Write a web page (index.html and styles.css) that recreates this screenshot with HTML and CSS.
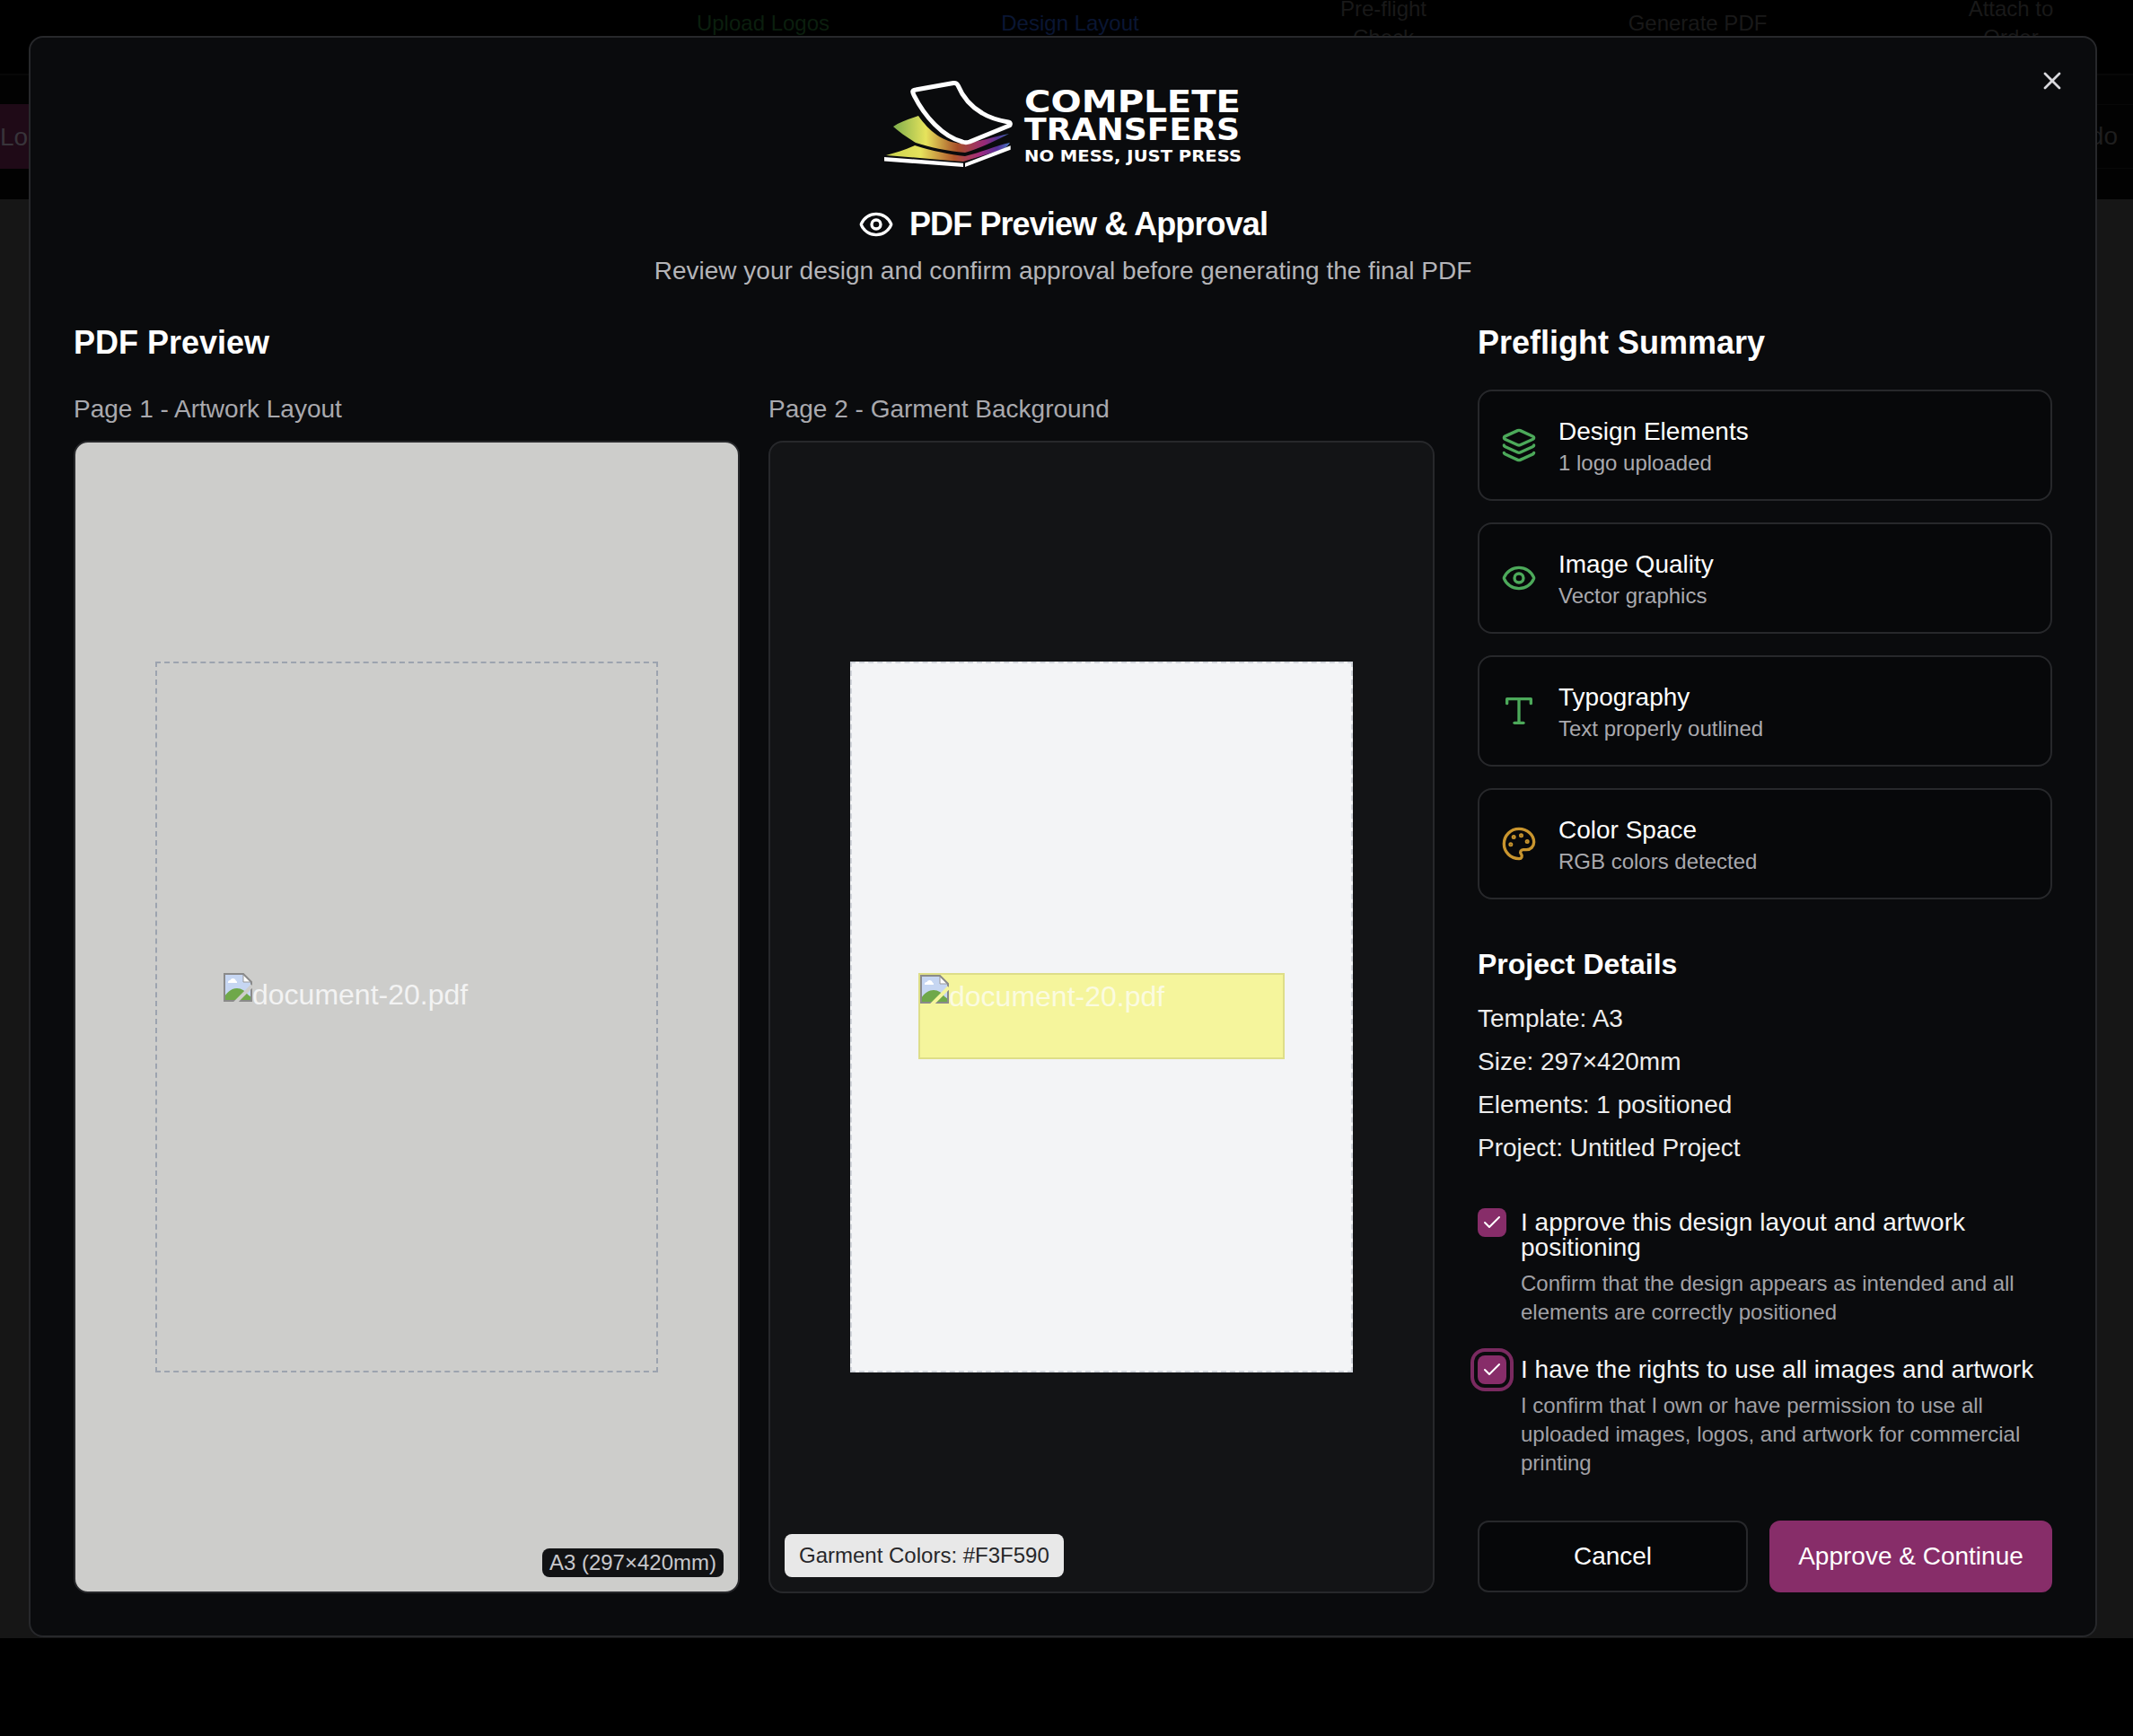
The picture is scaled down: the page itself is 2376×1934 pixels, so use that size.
FILE: index.html
```html
<!DOCTYPE html>
<html lang="en">
<head>
  <meta charset="UTF-8" />
  <meta name="viewport" content="width=device-width, initial-scale=1.0"/>
  <title>PDF Preview &amp; Approval</title>
  <link rel="stylesheet" href="styles.css">
</head>
<body>

  <!-- page behind the dialog, dimmed -->
  <div class="page-behind">
    <div class="stepper">
      <span class="step step-done">Upload Logos</span>
      <span class="step step-active">Design Layout</span>
      <span class="step step-wrap">Pre-flight Check</span>
      <span class="step">Generate PDF</span>
      <span class="step step-wrap">Attach to Order</span>
    </div>
    <div class="toolbar">
      <div class="tool-row">
        <span class="tool-btn">Lo</span>
        <span class="tool-end">do</span>
      </div>
    </div>
    <div class="main-area"></div>
  </div>

  <div class="modal">
    <button class="close-btn" type="button" aria-label="Close">
      <svg class="icon-close" viewBox="0 0 24 24"><path d="M18 6 6 18"/><path d="m6 6 12 12"/></svg>
    </button>

    <header class="modal-head">
      <svg class="logo" viewBox="24 20 400 110" role="img" aria-label="Complete Transfers">
        <defs>
          <linearGradient id="inkA" x1="35" y1="0" x2="165" y2="0" gradientUnits="userSpaceOnUse">
            <stop offset="0" stop-color="#7fae4c"/>
            <stop offset=".28" stop-color="#e6e35c"/>
            <stop offset=".55" stop-color="#a84f28"/>
            <stop offset=".78" stop-color="#9a2a78"/>
            <stop offset=".9" stop-color="#4f3596"/>
            <stop offset="1" stop-color="#4a78c0"/>
          </linearGradient>
          <linearGradient id="inkB" x1="27" y1="0" x2="165" y2="0" gradientUnits="userSpaceOnUse">
            <stop offset="0" stop-color="#c9d24e"/>
            <stop offset=".28" stop-color="#e6e35c"/>
            <stop offset=".55" stop-color="#b0562a"/>
            <stop offset=".76" stop-color="#a02a80"/>
            <stop offset=".9" stop-color="#54309a"/>
            <stop offset="1" stop-color="#4a78c0"/>
          </linearGradient>
        </defs>
        <path d="M35 81C42 76 52 73 63 69C75 86 90 99 113 100C130 98 148 92 164 89C150 96 130 106 115 110C95 108 75 104 60 99C50 93 42 87 35 81Z" fill="url(#inkA)"/>
        <path d="M27 113C38 110 48 107 59 102C78 108 98 112 115 114C132 110 150 102 165 99C162 104 158 106 152 108L113 120C85 118 55 115 27 113Z" fill="url(#inkB)"/>
        <path d="M58 46C56 42 56 40.500 60 40L102 32.500C105 32 106 33 107 35C112 47 122 59 134 66C142 71 152 74 163 76C166 76.500 166 79 164 80L120 98C117 99 115 99 112 98C90 92 70 70 58 46Z" fill="#0a0b0d" stroke="#fff" stroke-width="5" stroke-linejoin="round"/>
        <path d="M25 115L113 121.700V126L25 119.500Z" fill="#fff"/>
        <path d="M115 121.700L165.700 102.300V106.700L115 126Z" fill="#fff"/>
        <text class="logo-big" x="181" y="65" textLength="241" lengthAdjust="spacingAndGlyphs">COMPLETE</text>
        <text class="logo-big" x="181" y="95.500" textLength="240" lengthAdjust="spacingAndGlyphs">TRANSFERS</text>
        <text class="logo-small" x="181" y="120" textLength="242" lengthAdjust="spacingAndGlyphs">NO MESS, JUST PRESS</text>
      </svg>
      <h1 class="modal-title">
        <svg class="icon-title" viewBox="0 0 24 24"><path d="M2.060 12.350a1 1 0 0 1 0-.700 10.750 10.750 0 0 1 19.880 0 1 1 0 0 1 0 .700 10.750 10.750 0 0 1-19.880 0"/><circle cx="12" cy="12" r="3"/></svg>
        PDF Preview &amp; Approval
      </h1>
      <p class="modal-sub">Review your design and confirm approval before generating the final PDF</p>
    </header>

    <div class="modal-body">
      <section class="preview-col">
        <h2 class="section-title">PDF Preview</h2>
        <div class="pages">
          <div class="page-col">
            <div class="page-label">Page 1 - Artwork Layout</div>
            <div class="page-card page-card-light">
              <div class="sheet sheet-artwork">
                <div class="placed">
                  <svg class="broken-img slash-grey" viewBox="0 0 16 16"><use href="#brokenImg"/></svg><span class="alt-text">document-20.pdf</span>
                </div>
              </div>
              <span class="size-badge">A3 (297×420mm)</span>
            </div>
          </div>
          <div class="page-col">
            <div class="page-label">Page 2 - Garment Background</div>
            <div class="page-card">
              <div class="sheet sheet-garment">
                <div class="placed placed-yellow">
                  <svg class="broken-img slash-yellow" viewBox="0 0 16 16"><use href="#brokenImg"/></svg><span class="alt-text">document-20.pdf</span>
                </div>
              </div>
              <span class="garment-badge">Garment Colors: #F3F590</span>
            </div>
          </div>
        </div>
      </section>

      <aside class="summary-col">
        <h2 class="section-title">Preflight Summary</h2>
        <div class="checks">
          <div class="check-card">
            <svg class="check-icon icon-green" viewBox="0 0 24 24"><path d="M12.830 2.180a2 2 0 0 0-1.660 0L2.600 6.080a1 1 0 0 0 0 1.830l8.580 3.910a2 2 0 0 0 1.660 0l8.580-3.900a1 1 0 0 0 0-1.830z"/><path d="M2 12a1 1 0 0 0 .580.910l8.600 3.910a2 2 0 0 0 1.650 0l8.580-3.900A1 1 0 0 0 22 12"/><path d="M2 17a1 1 0 0 0 .580.910l8.600 3.910a2 2 0 0 0 1.650 0l8.580-3.900A1 1 0 0 0 22 17"/></svg>
            <div>
              <div class="check-name">Design Elements</div>
              <div class="check-note">1 logo uploaded</div>
            </div>
          </div>
          <div class="check-card">
            <svg class="check-icon icon-green" viewBox="0 0 24 24"><path d="M2.060 12.350a1 1 0 0 1 0-.700 10.750 10.750 0 0 1 19.880 0 1 1 0 0 1 0 .700 10.750 10.750 0 0 1-19.880 0"/><circle cx="12" cy="12" r="3"/></svg>
            <div>
              <div class="check-name">Image Quality</div>
              <div class="check-note">Vector graphics</div>
            </div>
          </div>
          <div class="check-card">
            <svg class="check-icon icon-green" viewBox="0 0 24 24"><path d="M4 7V4h16v3"/><path d="M9 20h6"/><path d="M12 4v16"/></svg>
            <div>
              <div class="check-name">Typography</div>
              <div class="check-note">Text properly outlined</div>
            </div>
          </div>
          <div class="check-card">
            <svg class="check-icon icon-amber" viewBox="0 0 24 24"><path d="M12 22a1 1 0 0 1 0-20 10 9 0 0 1 10 9 5 5 0 0 1-5 5h-2.250a1.750 1.750 0 0 0-1.400 2.800l.300.400a1.750 1.750 0 0 1-1.400 2.800z"/><circle class="dot" cx="13.500" cy="6.500" r=".5"/><circle class="dot" cx="17.500" cy="10.500" r=".5"/><circle class="dot" cx="6.500" cy="12.500" r=".5"/><circle class="dot" cx="8.500" cy="7.500" r=".5"/></svg>
            <div>
              <div class="check-name">Color Space</div>
              <div class="check-note">RGB colors detected</div>
            </div>
          </div>
        </div>

        <h3 class="details-title">Project Details</h3>
        <div class="details">
          <div>Template: A3</div>
          <div>Size: 297×420mm</div>
          <div>Elements: 1 positioned</div>
          <div>Project: Untitled Project</div>
        </div>

        <div class="approvals">
          <div class="approval">
            <span class="tick"><svg viewBox="0 0 24 24"><path d="M20 6 9 17l-5-5"/></svg></span>
            <div>
              <div class="approval-name">I approve this design layout and artwork positioning</div>
              <div class="approval-note">Confirm that the design appears as intended and all elements are correctly positioned</div>
            </div>
          </div>
          <div class="approval">
            <span class="tick tick-focus"><svg viewBox="0 0 24 24"><path d="M20 6 9 17l-5-5"/></svg></span>
            <div>
              <div class="approval-name">I have the rights to use all images and artwork</div>
              <div class="approval-note">I confirm that I own or have permission to use all uploaded images, logos, and artwork for commercial printing</div>
            </div>
          </div>
        </div>

        <div class="actions">
          <button class="btn btn-cancel" type="button">Cancel</button>
          <button class="btn btn-approve" type="button">Approve &amp; Continue</button>
        </div>
      </aside>
    </div>
  </div>

  <svg class="svg-defs" aria-hidden="true">
    <symbol id="brokenImg" viewBox="0 0 16 16">
      <path class="bi-sky" d="M.5.5h10.500l4.500 4.500v10.500H.5z"/>
      <path class="bi-fold" d="M11 .5v4.500h4.500z"/>
      <path class="bi-cloud" d="M2.500 5.500a1.300 1.300 0 0 1 1.200-1.500 1.700 1.700 0 0 1 3.200.200 1.200 1.200 0 0 1 .600 1.300z"/>
      <path class="bi-hill" d="M.5 15.500v-2.500c2-3 4.500-4.500 7-4.500 2.500 0 4.500 1.500 6 3.500l2 1.500v2z"/>
      <path class="bi-edge" d="M.5 15.500V.5h10.500l4.500 4.500v10.500z"/>
      <path class="bi-slash" d="M6 17 16 7"/>
    </symbol>
  </svg>

</body>
</html>
```
FILE: styles.css
```css
* {
  box-sizing: border-box;
}

html, body {
  margin: 0;
  height: 100%;
}

body {
  font-family: 'Liberation Sans', Arial, sans-serif;
  background: #000;
  color: #fff;
  overflow: hidden;
  position: relative;
}

.svg-defs {
  position: absolute;
  width: 0;
  height: 0;
}

/* dimmed page */
.page-behind {
  height: 1825px;
  display: flex;
  flex-direction: column;
}

.stepper {
  height: 82px;
  position: relative;
  font-size: 24px;
  color: #191919;
}

.step {
  position: absolute;
  top: 10px;
  white-space: nowrap;
  transform: translateX(-50%);
  line-height: 32px;
}

.step:nth-child(1) { left: 850px; }
.step:nth-child(2) { left: 1192px; }
.step:nth-child(3) { left: 1541px; }
.step:nth-child(4) { left: 1891px; }
.step:nth-child(5) { left: 2240px; }

.step-done { color: #0b1f0e; }
.step-active { color: #0a1633; }

.step-wrap {
  top: -6px;
  white-space: normal;
  width: 120px;
  text-align: center;
}

.toolbar {
  height: 140px;
  background: #020202;
  border-top: 2px solid #070707;
  display: flex;
  align-items: center;
  font-size: 28px;
}

.tool-row {
  flex: 1;
  height: 72px;
  margin-top: -2px;
  border-top: 1px solid #080808;
  border-bottom: 1px solid #080808;
  display: flex;
  justify-content: space-between;
  align-items: center;
}

.tool-btn {
  background: #1f0a17;
  height: 72px;
  line-height: 74px;
  width: 40px;
  margin: -1px 0;
  color: #38343a;
}

.tool-end {
  color: #1e1e1e;
  padding-right: 17px;
}

.main-area {
  flex: 1;
  background: #161616;
}

/* dialog */
.modal {
  position: absolute;
  left: 32px;
  top: 40px;
  width: 2304px;
  height: 1784px;
  background: #0a0b0d;
  border: 2px solid #27282b;
  border-radius: 16px;
  padding: 38px 48px 48px;
}

.close-btn {
  position: absolute;
  top: 32px;
  right: 32px;
  width: 32px;
  height: 32px;
  padding: 0;
  border: 0;
  background: none;
}

.icon-close {
  display: block;
  width: 32px;
  height: 32px;
  fill: none;
  stroke: #d8d8dc;
  stroke-width: 2;
  stroke-linecap: round;
}

.modal-head {
  text-align: center;
}

.logo {
  display: block;
  width: 400px;
  height: 110px;
  margin: 0 auto;
}

.logo text {
  fill: #fff;
  font-family: 'DejaVu Sans', sans-serif;
  font-weight: bold;
}

.logo-big {
  font-size: 33px;
}

.logo-small {
  font-size: 18px;
}

.modal-title {
  margin: 38px 0 0;
  font-size: 36px;
  line-height: 44px;
  font-weight: bold;
  letter-spacing: -0.9px;
  display: flex;
  justify-content: center;
  align-items: center;
  gap: 17px;
}

.icon-title {
  width: 40px;
  height: 40px;
  fill: none;
  stroke: #fff;
  stroke-width: 2;
  stroke-linecap: round;
  stroke-linejoin: round;
}

.modal-sub {
  margin: 10px 0 0;
  font-size: 28px;
  line-height: 40px;
  color: #b4b4b8;
}

.modal-body {
  display: grid;
  grid-template-columns: 1516px 640px;
  gap: 48px;
  margin-top: 38px;
}

.section-title {
  margin: 0;
  font-size: 36px;
  line-height: 44px;
  font-weight: bold;
}

.pages {
  display: grid;
  grid-template-columns: 1fr 1fr;
  gap: 32px;
  margin-top: 32px;
}

.page-label {
  font-size: 28px;
  line-height: 40px;
  color: #a9a9ae;
  margin-bottom: 15px;
}

.page-card {
  position: relative;
  height: 1284px;
  background: #131416;
  border: 2px solid #27282b;
  border-radius: 16px;
  display: flex;
  align-items: center;
  justify-content: center;
}

.page-card-light {
  background: #cdcdcb;
}

.sheet {
  position: relative;
  width: 560px;
  height: 792px;
  border: 2px dashed #9ca3af;
}

.sheet-garment {
  background: #f3f4f6;
  border-color: #d1d5db;
}

.placed {
  position: absolute;
  left: 74px;
  top: 345px;
  width: 408px;
  height: 96px;
  font-size: 32px;
  line-height: 32px;
  color: #f3f3f3;
  display: flex;
  align-items: flex-start;
}

.placed-yellow {
  background: #f5f59c;
  border: 2px solid #dede88;
  color: #fbfbe0;
}

.broken-img {
  width: 32px;
  height: 32px;
  flex: none;
}

.alt-text {
  position: relative;
  top: 8px;
}

.bi-sky { fill: #c6d6f2; }
.bi-fold { fill: #fff; stroke: #999; stroke-width: 0.5; }
.bi-cloud { fill: #fff; }
.bi-hill { fill: #6fa84a; }
.bi-edge { fill: none; stroke: #8a8a8a; stroke-width: 1; }
.bi-slash { fill: none; stroke-width: 2; stroke: var(--slash); }

.slash-grey { --slash: #cdcdcb; }
.slash-yellow { --slash: #f5f59c; }

.size-badge {
  position: absolute;
  right: 16px;
  bottom: 16px;
  height: 32px;
  line-height: 32px;
  padding: 0 8px;
  font-size: 24px;
  background: #111214;
  color: #c8c8cc;
  border-radius: 8px;
}

.garment-badge {
  position: absolute;
  left: 16px;
  bottom: 16px;
  height: 48px;
  line-height: 48px;
  padding: 0 16px;
  font-size: 24px;
  background: #e8e8e8;
  color: #27272a;
  border-radius: 8px;
}

/* right column */
.checks {
  display: flex;
  flex-direction: column;
  gap: 24px;
  margin-top: 30px;
}

.check-card {
  height: 124px;
  background: #07080a;
  border: 2px solid #27282b;
  border-radius: 16px;
  padding: 24px;
  display: flex;
  align-items: center;
  gap: 24px;
}

.check-icon {
  width: 40px;
  height: 40px;
  flex: none;
  fill: none;
  stroke-width: 2;
  stroke-linecap: round;
  stroke-linejoin: round;
}

.icon-green { stroke: #4ca95a; }
.icon-amber { stroke: #c9952e; }
.icon-amber .dot { fill: #c9952e; }

.check-name {
  font-size: 28px;
  line-height: 40px;
  padding-top: 1px;
  margin-bottom: -1px;
}

.check-note {
  font-size: 24px;
  line-height: 32px;
  color: #a9a9ae;
}

.details-title {
  margin: 52px 0 0;
  font-size: 32px;
  line-height: 40px;
  font-weight: bold;
}

.details {
  margin-top: 21px;
  font-size: 28px;
  line-height: 40px;
  color: #ececec;
  display: flex;
  flex-direction: column;
  gap: 8px;
}

.approvals {
  margin-top: 47px;
  display: flex;
  flex-direction: column;
  gap: 32px;
}

.approval {
  display: flex;
  gap: 16px;
}

.tick {
  flex: none;
  width: 32px;
  height: 32px;
  background: #872d69;
  border-radius: 8px;
  display: flex;
  align-items: center;
  justify-content: center;
}

.tick svg {
  width: 24px;
  height: 24px;
  fill: none;
  stroke: #fff;
  stroke-width: 2;
  stroke-linecap: round;
  stroke-linejoin: round;
}

.tick-focus {
  box-shadow: 0 0 0 4px #0a0b0d, 0 0 0 8px #7a2a60;
}

.approval-name {
  font-size: 28px;
  line-height: 28px;
  color: #f5f5f5;
  padding-top: 2px;
}

.approval-note {
  margin-top: 10px;
  font-size: 24px;
  line-height: 32px;
  color: #a1a1a6;
}

.actions {
  display: grid;
  grid-template-columns: 301px 315px;
  gap: 24px;
  margin-top: 48px;
}

.btn {
  height: 80px;
  font-family: inherit;
  font-size: 28px;
  color: #fff;
  border-radius: 12px;
  border: 2px solid #27282b;
  background: #060709;
}

.btn-approve {
  background: #872d69;
  border-color: #872d69;
}
```
